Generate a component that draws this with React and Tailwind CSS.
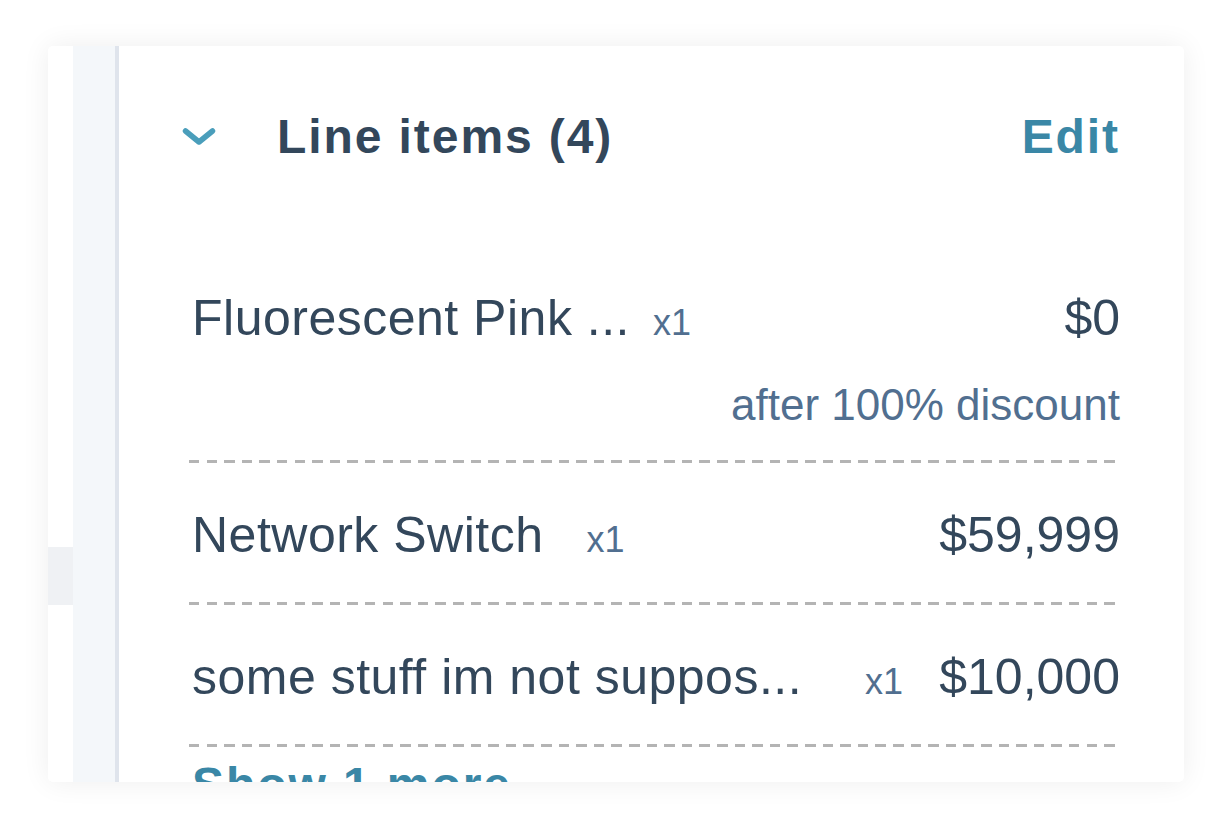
import React from "react";

const FONT = { fontFamily: '"Liberation Sans", Arial, sans-serif' };

function Dash() {
  return (
    <div className="ml-[-3px] h-[3px] bg-[repeating-linear-gradient(90deg,#b4b4b4_0px,#b4b4b4_10.5px,transparent_10.5px,transparent_17.6px)]" />
  );
}

function Row({ name, price, mt, gap, children }) {
  return (
    <div className={mt}>
      <div className="h-[60px] flex items-baseline leading-[60px] overflow-visible">
        <span className="text-[50px] tracking-[0.01em] text-[#33475b] whitespace-nowrap">{name}</span>
        <span className={gap + " text-[36px] text-[#516f90]"}>x1</span>
        <span className="flex-1" />
        <span className="text-[50px] text-[#33475b] whitespace-nowrap">{price}</span>
      </div>
      {children}
    </div>
  );
}

export default function App() {
  return (
    <div className="w-[1232px] h-[832px] bg-white pt-[46px] pl-[48px]" style={FONT}>
      <div className="w-[1136px] h-[736px] bg-white rounded-[5px] overflow-hidden flex shadow-[0_0_28px_rgba(0,0,0,0.07)]">
        <div className="w-[25px] flex flex-col">
          <div className="h-[501px] bg-white" />
          <div className="h-[58px] bg-[#eff1f4]" />
          <div className="flex-1 bg-white" />
        </div>
        <div className="w-[42px] bg-[#f4f7fa] border-r-[4px] border-[#dfe4ec] box-content" />
        <div className="flex-1 pl-[73px] pr-[64px]">
          <div className="mt-[62px] ml-[-10px] h-[58px] flex items-center">
            <svg width="34" height="22" viewBox="0 0 34 22" className="shrink-0">
              <path d="M3.5 5 L17 16 L30.5 5" fill="none" stroke="#4a9ebb" strokeWidth="5.5" strokeLinecap="round" strokeLinejoin="round" />
            </svg>
            <span className="ml-[61px] text-[48px] font-bold tracking-[0.04em] text-[#33475b] leading-[58px]">Line items (4)</span>
            <span className="flex-1" />
            <span className="text-[48px] font-bold tracking-[0.04em] text-[#3a87a6] leading-[58px]">Edit</span>
          </div>

          <Row name="Fluorescent Pink ..." price="$0" mt="mt-[122px]" gap="ml-[23px]">
            <div className="mt-[31px] text-right text-[44px] leading-[52px] text-[#516f90]">after 100% discount</div>
            <div className="mt-[29px]"><Dash /></div>
          </Row>

          <Row name="Network Switch" price="$59,999" mt="mt-[42px]" gap="ml-[43px]">
            <div className="mt-[37px]"><Dash /></div>
          </Row>

          <Row name="some stuff im not suppos..." price="$10,000" mt="mt-[42px]" gap="ml-[63px]">
            <div className="mt-[37px]"><Dash /></div>
          </Row>

          <div className="mt-[9px] text-[48px] font-bold tracking-[0.04em] text-[#3a87a6] leading-[58px] whitespace-nowrap">Show 1 more</div>
        </div>
      </div>
    </div>
  );
}
